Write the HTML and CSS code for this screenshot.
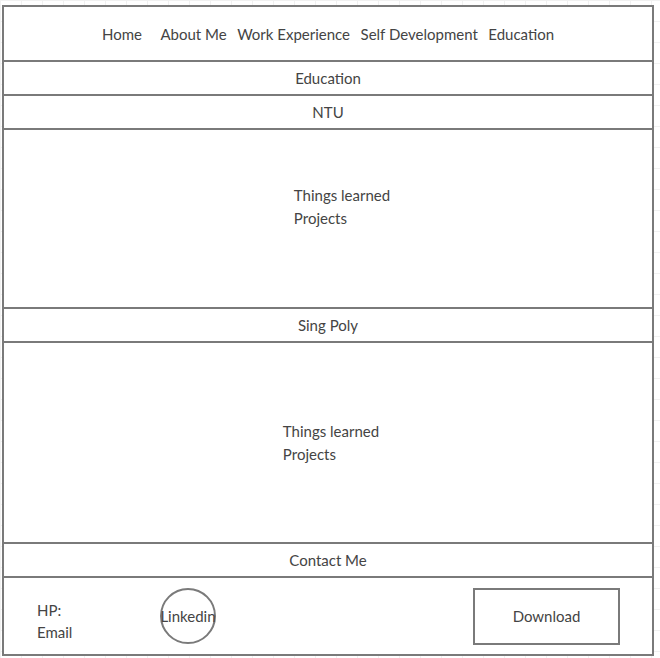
FILE: index.html
```html
<!DOCTYPE html>
<html lang="en">
<head>
<meta charset="utf-8">
<title>Wireframe</title>
<link rel="stylesheet" href="styles.css">
</head>
<body>
<div class="frame">
  <nav class="nav">
    <span class="nav-item nav-home">Home</span>
    <span class="nav-item">About Me</span>
    <span class="nav-item">Work Experience</span>
    <span class="nav-item">Self Development</span>
    <span class="nav-item">Education</span>
  </nav>
  <div class="bar">Education</div>
  <div class="bar">NTU</div>
  <div class="panel panel-ntu">
    <div class="panel-text panel-text-ntu">
      <div>Things learned</div>
      <div>Projects</div>
    </div>
  </div>
  <div class="bar">Sing Poly</div>
  <div class="panel panel-poly">
    <div class="panel-text panel-text-poly">
      <div>Things learned</div>
      <div>Projects</div>
    </div>
  </div>
  <div class="bar">Contact Me</div>
  <footer class="footer">
    <div class="contact">
      <div>HP:</div>
      <div>Email</div>
    </div>
    <div class="circle"><span>Linkedin</span></div>
    <div class="download">Download</div>
  </footer>
</div>
</body>
</html>
```

FILE: styles.css
```css
html {
  background-color: #ffffff;
  background-image:
    linear-gradient(to right, #f1f1f1 1px, transparent 1px),
    linear-gradient(to bottom, #f1f1f1 1px, transparent 1px);
  background-size: 21px 21px;
}

body {
  margin: 0;
  font-family: Lato, "Open Sans", sans-serif;
  font-size: 15px;
  color: #444444;
}

.frame {
  margin: 5px 0 0 2px;
  width: 652px;
  box-sizing: border-box;
  border: 2px solid #7a7a7a;
  background: #ffffff;
  display: flex;
  flex-direction: column;
}

.nav {
  height: 53px;
  display: flex;
  align-items: center;
  justify-content: center;
  gap: 10.5px;
}

.nav-home {
  margin-right: 8px;
}

.bar {
  height: 32px;
  border-top: 2px solid #7a7a7a;
  display: flex;
  align-items: center;
  justify-content: center;
}

.panel {
  border-top: 2px solid #7a7a7a;
  display: flex;
  align-items: center;
  justify-content: center;
  line-height: 23px;
}

.panel-ntu {
  height: 177px;
}

.panel-poly {
  height: 199px;
}

.panel-text-ntu {
  margin: 0 0 23px 28px;
}

.panel-text-poly {
  margin: 0 0 0 6px;
}

.footer {
  height: 76px;
  border-top: 2px solid #7a7a7a;
  display: flex;
  align-items: center;
}

.contact {
  margin: 9px 0 0 33px;
  line-height: 22px;
  width: 35px;
}

.circle {
  margin-left: 88px;
  width: 56px;
  height: 56px;
  box-sizing: border-box;
  border: 2px solid #7a7a7a;
  border-radius: 50%;
  display: flex;
  align-items: center;
  justify-content: center;
  white-space: nowrap;
}

.download {
  margin-left: auto;
  margin-right: 32px;
  width: 147px;
  height: 57px;
  box-sizing: border-box;
  border: 2px solid #7a7a7a;
  display: flex;
  align-items: center;
  justify-content: center;
}
```
